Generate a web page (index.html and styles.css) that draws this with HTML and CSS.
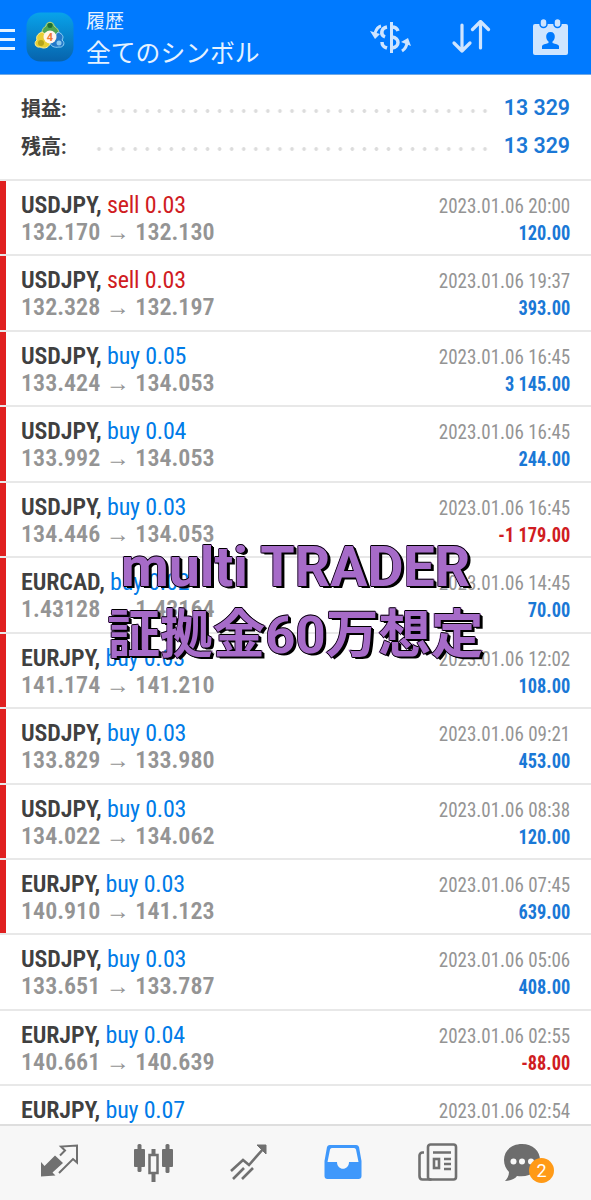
FILE: index.html
```html
<!DOCTYPE html>
<html lang="ja">

<head>
    <meta charset="UTF-8">
    <meta name="viewport" content="width=device-width, initial-scale=1.0">
    <title>履歴</title>
    <link rel="stylesheet" href="styles.css">
</head>

<body>
    <div class="app">
        <header class="header">
            <div class="menu"><i></i><i></i><i></i></div>
            <svg class="logo" viewBox="0 0 48 50">
                <defs>
                    <linearGradient id="logoBg" x1="0" y1="0" x2="0" y2="1">
                        <stop offset="0" stop-color="#08a3ea" />
                        <stop offset="1" stop-color="#0763ac" />
                    </linearGradient>
                </defs>
                <rect x="0.5" y="0.5" width="47" height="49" rx="14" fill="url(#logoBg)" />
                <path d="M16 21c0-4 2-6 4-7 0-5 8-5 8 0 3 2 5 4 5 8l-8 3z" fill="#4fa553" stroke="#c1da7a" stroke-width="1" />
                <path d="M16 20c-5 2-6 5-5 8-4 3-1 8 3 7 4 2 8 1 10-3l-2-8z" fill="#e7cf35" stroke="#fff09a" stroke-width="1" />
                <path d="M32 20c5 2 6 5 4 8 4 3 1 8-3 7-5 1-8-1-9-4l4-6z" fill="#2479c9" stroke="#8fd0f5" stroke-width="1" />
                <circle cx="24" cy="13.500" r="2.500" fill="#1f6d33" />
                <circle cx="15" cy="31" r="3" fill="#b5a51c" />
                <circle cx="33" cy="31" r="2.500" fill="#8bc9ee" />
                <circle cx="24" cy="25" r="6.500" fill="#fff6ec" />
                <text x="24" y="29" class="logo-num">4</text>
            </svg>
            <div class="title">
                <div class="title-small">履歴</div>
                <div class="title-big">全てのシンボル</div>
            </div>
            <div class="actions">
                <svg width="42" height="34" viewBox="0 0 42 34" fill="none" stroke="#cfe5ff" stroke-width="3">
                    <path d="M21.500 2v31" stroke-width="3" />
                    <path d="M28 11c-1-3-3-4-6-4M17 7c-6 1-7 8-2 10M22 17c8 1 8 10 0 11M12 22c0 4 2 5 5 6" stroke-width="3.500" />
                    <path d="M11 6c-4 1-5 4-6 7M32 31c3-2 5-5 5-9" stroke-width="3" />
                    <path d="M0 11l10 3-5 5zM31 22l7-4 3 8z" fill="#cfe5ff" stroke="none" />
                </svg>
                <svg width="40" height="34" viewBox="0 0 40 34" fill="none" stroke="#cfe5ff" stroke-width="3.200" stroke-linecap="round" stroke-linejoin="round">
                    <path d="M11 5v26M3 23l8 8 8-8" />
                    <path d="M29.500 28V2M21.500 9.500l8-8 8 8" />
                </svg>
                <svg width="37" height="38" viewBox="0 0 37 38">
                    <path d="M3 6h31a2 2 0 0 1 2 2v27a2 2 0 0 1-2 2H3a2 2 0 0 1-2-2V8a2 2 0 0 1 2-2z" fill="#cfe5ff" />
                    <rect x="8" y="0.500" width="7" height="9" rx="3.500" fill="#cfe5ff" stroke="#007aff" stroke-width="1.500" />
                    <rect x="22" y="0.500" width="7" height="9" rx="3.500" fill="#cfe5ff" stroke="#007aff" stroke-width="1.500" />
                    <path d="M18.500 14c-3 0-4.500 2-4.300 5 .2 2 1.100 3.500 2.300 4.500v1.500c-3 1-6 1.500-6.500 3V31h17v-3c-.5-1.500-3.500-2-6.500-3v-1.500c1.200-1 2.100-2.500 2.300-4.500.2-3-1.300-5-4.300-5z" fill="#007aff" />
                </svg>
            </div>
        </header>

        <section class="summary">
            <div class="summary-row">
                <span class="summary-label">損益:</span>
                <span class="dots"></span>
                <span class="summary-value">13 329</span>
            </div>
            <div class="summary-row">
                <span class="summary-label">残高:</span>
                <span class="dots"></span>
                <span class="summary-value">13 329</span>
            </div>
        </section>

        <main class="list" id="list"></main>

        <nav class="tabs">
            <svg width="40" height="36" viewBox="0 0 40 36">
                <path d="M1 33.500V19l3.500 4L15 12.500l8 7.500L12.500 29.500l3 3z" fill="#707070" />
                <path d="M19 30l14-14 4 3.500V2.500L21 3.500l4 4-5 5" fill="none" stroke="#707070" stroke-width="2" />
            </svg>
            <svg width="40" height="40" viewBox="0 0 40 40" fill="#707070">
                <rect x="0" y="6" width="11" height="18" rx="1" />
                <rect x="3.500" y="1" width="4" height="28" rx="1.500" />
                <rect x="28" y="6" width="11" height="18" rx="1" />
                <rect x="31.500" y="1" width="4" height="29" rx="1.500" />
                <path d="M17.500 6h4v6h-4zM17.500 30h4v9h-4z" />
                <rect x="15.500" y="12" width="8" height="18" fill="none" stroke="#707070" stroke-width="2.500" />
            </svg>
            <svg width="40" height="38" viewBox="0 0 40 38" fill="none" stroke="#707070" stroke-width="2.600">
                <path d="M2 28l12-11 6 5L35 5" />
                <path d="M4 36l11-11M13 36l11-11" />
                <path d="M28 2h9v9z" fill="#707070" stroke-width="1" />
            </svg>
            <svg width="40" height="38" viewBox="0 0 40 38">
                <path d="M7 2h26a3 3 0 0 1 3 2l2.500 14v15a3 3 0 0 1-3 3h-31a3 3 0 0 1-3-3V18L4 4a3 3 0 0 1 3-2z" fill="#3f98fb" />
                <path d="M9 5h22a2 2 0 0 1 2 1.500L35.500 19H26c0 9-12 9-12 0H4.500L7 6.500A2 2 0 0 1 9 5z" fill="#f8f8f8" />
            </svg>
            <svg width="40" height="40" viewBox="0 0 40 40" fill="none" stroke="#707070" stroke-width="2.600">
                <rect x="10" y="1.500" width="28" height="35" rx="2.500" />
                <path d="M6 9.500H4.500a3 3 0 0 0-3 3V33c0 2 1 3.500 3 3.500h9" />
                <path d="M15 9.500h18M26 16h7M26 21h7M26 26h7" />
                <rect x="16" y="16" width="5" height="9" />
            </svg>
            <div class="chat">
                <svg width="38" height="40" viewBox="0 0 38 40">
                    <path d="M19 1C8 1 1 8 1 17c0 5 2 9 5 12 0 4-2 7-4 9 5 0 10-2 12-5 14 2 23-6 23-16C37 8 30 1 19 1z" fill="#6d6d6d" />
                    <g fill="#f8f8f8">
                        <circle cx="10.500" cy="18.500" r="3" />
                        <circle cx="19" cy="18.500" r="3" />
                        <circle cx="28" cy="18.500" r="3" />
                    </g>
                </svg>
                <span class="badge">2</span>
            </div>
        </nav>

        <div class="caption">
            <div class="caption-en">multi TRADER</div>
            <div class="caption-ja">証拠金60万想定</div>
        </div>
    </div>
    <script src="script.js"></script>
</body>

</html>
```
FILE: styles.css
```css
* {
    box-sizing: border-box;
}

body {
    margin: 0;
    background-color: #fff;
    font-family: Roboto, "Noto Sans CJK JP", sans-serif;
    color: #404040;
}

.app {
    position: relative;
    display: flex;
    flex-direction: column;
    width: 591px;
    height: 1200px;
    overflow: hidden;
}

.header {
    display: flex;
    align-items: center;
    flex: none;
    height: 75px;
    padding-right: 22px;
    background-color: #007aff;
    border-bottom: 1px solid #70a9e5;
    color: #e6f2ff;
}

.menu {
    display: flex;
    flex-direction: column;
    gap: 6px;
    width: 15px;
    margin-top: 4px;
}

.menu i {
    height: 3px;
    background-color: #e6f4ff;
}

.logo {
    width: 48px;
    height: 50px;
    margin-left: 11px;
}

.logo-num {
    font: bold 11px Roboto, sans-serif;
    fill: #ef7a35;
    text-anchor: middle;
}

.title {
    margin-top: 7px;
    margin-left: 12px;
    white-space: nowrap;
}

.title-small {
    font-size: 19px;
    line-height: 26px;
}

.title-big {
    font-size: 24.8px;
    line-height: 37px;
}

.actions {
    display: flex;
    align-items: center;
    gap: 40px;
    margin-left: auto;
}

.actions svg:nth-child(2) {
    margin-left: -1px;
    margin-right: 1px;
}

.summary {
    flex: none;
    height: 106px;
    padding: 14px 21px 0;
    border-bottom: 2px solid #e8e8e8;
}

.summary-row {
    display: flex;
    align-items: center;
    height: 38px;
}

.summary-label {
    width: 72px;
    margin-top: -2px;
    font-size: 20px;
    font-weight: bold;
}

.dots {
    flex: none;
    width: 400px;
    height: 4px;
    margin-top: 5px;
    background: radial-gradient(circle at 6px 2px, #dcdcdc 1.5px, transparent 2.2px) 0 0 / 12.07px 4px repeat-x;
}

.summary-value {
    margin-left: auto;
    margin-top: -1px;
    font-size: 21.3px;
    font-weight: 600;
    color: #1a78d6;
    white-space: nowrap;
}

.list {
    flex: 1;
    min-height: 0;
    overflow: hidden;
    font-family: "Roboto Condensed", Roboto, sans-serif;
    font-stretch: 75%;
}

.row {
    display: flex;
    justify-content: space-between;
    height: 75.45px;
    padding: 10px 21px 0;
    border-bottom: 2px solid #e8e8e8;
    white-space: nowrap;
}

.row.marked {
    background: linear-gradient(#e02020, #e02020) 0 0 / 6px 100% no-repeat;
}

.symbol {
    font-size: 24px;
    line-height: 28px;
    font-weight: 600;
    letter-spacing: -0.1px;
}

.order {
    font-weight: 400;
    letter-spacing: -0.2px;
    color: #007be8;
}

.order.sell {
    color: #d01c22;
}

.prices {
    font-size: 24px;
    line-height: 26px;
    font-weight: 600;
    color: #949494;
}

/* dates and profits are set narrower than the condensed face */
.date,
.profit {
    transform: scaleX(0.905);
    transform-origin: right;
    text-align: right;
}

.date {
    padding-top: 1px;
    font-size: 21px;
    line-height: 28px;
    color: #949494;
}

.profit {
    font-size: 20.3px;
    line-height: 26px;
    font-weight: 700;
    color: #1a78d6;
}

.profit.loss {
    color: #d01c22;
}

.tabs {
    display: grid;
    grid-template-columns: repeat(6, 94.5px);
    flex: none;
    height: 76px;
    padding: 17px 0 0 39.5px;
    background-color: #f7f7f7;
    border-top: 2px solid #dedede;
}

.chat {
    position: relative;
    margin-left: -9px;
}

.badge {
    position: absolute;
    top: 15px;
    left: 26px;
    width: 25px;
    height: 25px;
    border-radius: 50%;
    background-color: #ff9a17;
    color: #fff;
    font-size: 18px;
    line-height: 25px;
    text-align: center;
}

/* the stroke thickens the letters, the shadows outline them */
.caption {
    position: absolute;
    top: 535px;
    left: 0;
    width: 100%;
    color: #a66bc8;
    font-weight: 700;
    text-align: center;
    text-shadow: -0.7px 0 #000, 0.7px 0 #000, 0 -0.7px #000, 0 0.7px #000, 2px 1px #000, 3px 2px #000;
    -webkit-text-stroke: 1.8px #a66bc8;
    paint-order: stroke fill;
    white-space: nowrap;
}

.caption-en {
    font-size: 55.5px;
    line-height: 66px;
}

.caption-ja {
    font-size: 52.6px;
    line-height: 68px;
}
```
FILE: script.js
```js
const deals = [
    ['USDJPY', 'sell 0.03', '132.170', '132.130', '2023.01.06 20:00', '120.00'],
    ['USDJPY', 'sell 0.03', '132.328', '132.197', '2023.01.06 19:37', '393.00'],
    ['USDJPY', 'buy 0.05', '133.424', '134.053', '2023.01.06 16:45', '3 145.00'],
    ['USDJPY', 'buy 0.04', '133.992', '134.053', '2023.01.06 16:45', '244.00'],
    ['USDJPY', 'buy 0.03', '134.446', '134.053', '2023.01.06 16:45', '-1 179.00'],
    ['EURCAD', 'buy 0.02', '1.43128', '1.43164', '2023.01.06 14:45', '70.00'],
    ['EURJPY', 'buy 0.03', '141.174', '141.210', '2023.01.06 12:02', '108.00'],
    ['USDJPY', 'buy 0.03', '133.829', '133.980', '2023.01.06 09:21', '453.00'],
    ['USDJPY', 'buy 0.03', '134.022', '134.062', '2023.01.06 08:38', '120.00'],
    ['EURJPY', 'buy 0.03', '140.910', '141.123', '2023.01.06 07:45', '639.00'],
    ['USDJPY', 'buy 0.03', '133.651', '133.787', '2023.01.06 05:06', '408.00'],
    ['EURJPY', 'buy 0.04', '140.661', '140.639', '2023.01.06 02:55', '-88.00'],
    ['EURJPY', 'buy 0.07', '', '', '2023.01.06 02:54', '']
];

// the first ten deals carry the red marker
document.getElementById('list').innerHTML = deals.map(function (d, i) {
    const [symbol, order, open, close, date, profit] = d;
    return `<div class="row ${i < 10 ? 'marked' : ''}">
        <div class="left">
            <div class="symbol">${symbol}, <span class="order ${order.startsWith('sell') ? 'sell' : ''}">${order}</span></div>
            <div class="prices">${open ? `${open} <span class="arrow">→</span> ${close}` : ''}</div>
        </div>
        <div class="right">
            <div class="date">${date}</div>
            <div class="profit ${profit.startsWith('-') ? 'loss' : ''}">${profit}</div>
        </div>
    </div>`;
}).join('');
```
